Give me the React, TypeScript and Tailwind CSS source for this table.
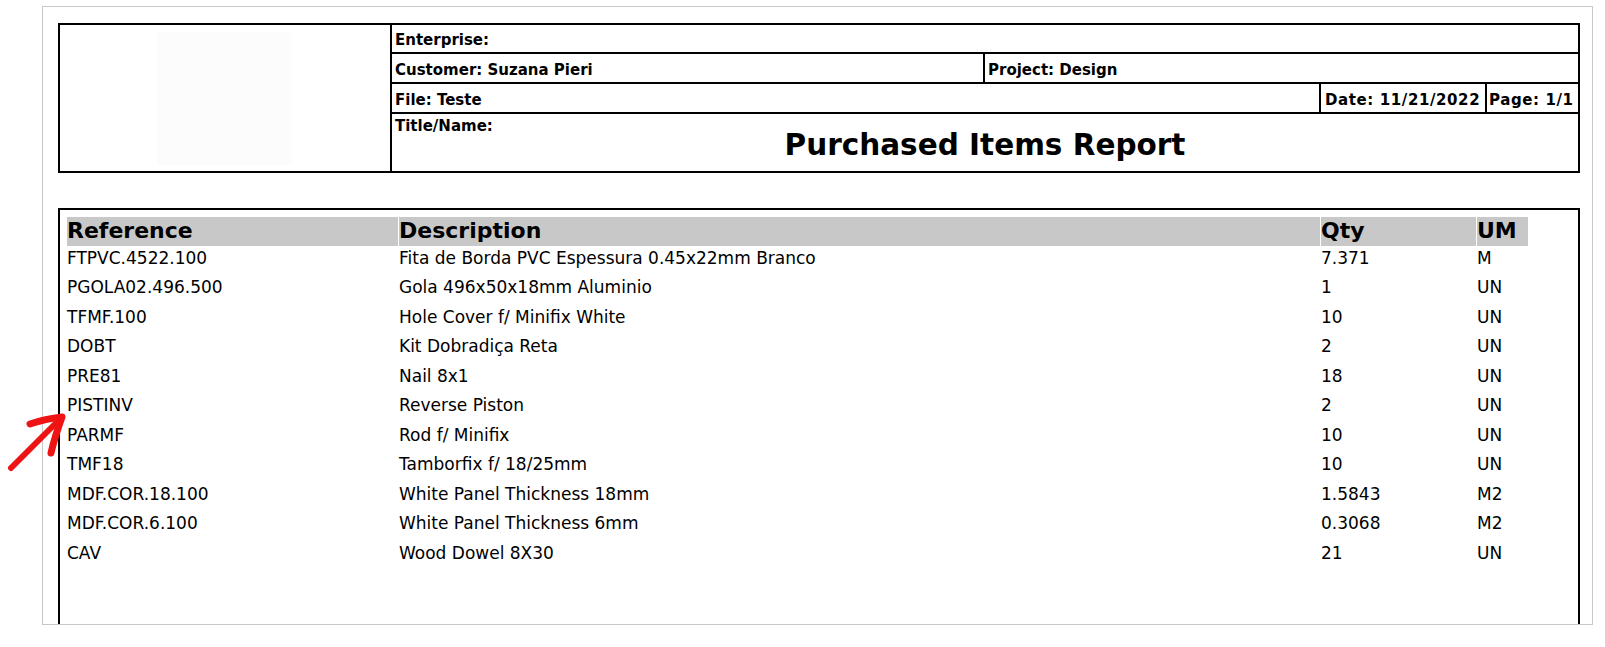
import React from 'react';

type Item = { ref: string; desc: string; qty: string; um: string };

const items: Item[] = [
  { ref: 'FTPVC.4522.100', desc: 'Fita de Borda PVC Espessura 0.45x22mm Branco', qty: '7.371', um: 'M' },
  { ref: 'PGOLA02.496.500', desc: 'Gola 496x50x18mm Aluminio', qty: '1', um: 'UN' },
  { ref: 'TFMF.100', desc: 'Hole Cover f/ Minifix White', qty: '10', um: 'UN' },
  { ref: 'DOBT', desc: 'Kit Dobradiça Reta', qty: '2', um: 'UN' },
  { ref: 'PRE81', desc: 'Nail 8x1', qty: '18', um: 'UN' },
  { ref: 'PISTINV', desc: 'Reverse Piston', qty: '2', um: 'UN' },
  { ref: 'PARMF', desc: 'Rod f/ Minifix', qty: '10', um: 'UN' },
  { ref: 'TMF18', desc: 'Tamborfix f/ 18/25mm', qty: '10', um: 'UN' },
  { ref: 'MDF.COR.18.100', desc: 'White Panel Thickness 18mm', qty: '1.5843', um: 'M2' },
  { ref: 'MDF.COR.6.100', desc: 'White Panel Thickness 6mm', qty: '0.3068', um: 'M2' },
  { ref: 'CAV', desc: 'Wood Dowel 8X30', qty: '21', um: 'UN' },
];

const cols = 'grid grid-cols-[331px_921px_155px_51px] gap-x-[1px]';

const App: React.FC = () => {
  return (
    <div className="relative min-h-screen bg-white text-black font-['DejaVu_Sans',Verdana,sans-serif]">
      <div className="pl-[42px] pt-[6px]">
        {/* Page sheet */}
        <div className="w-[1551px] h-[619px] border border-[#c8c8c8] overflow-hidden pl-[15px] pt-[16px]">
          {/* Header block */}
          <div className="w-[1522px] h-[150px] border-2 border-black flex">
            <div className="w-[332px] shrink-0 border-r-2 border-black pl-[97px] pt-[7px]">
              <div className="w-[135px] h-[133px] bg-[#fcfcfc]" />
            </div>
            <div className="flex-1 flex flex-col text-[15px] font-bold">
              <div className="h-[29px] border-b-2 border-black pl-[3px] pt-[6px] leading-[18px]">Enterprise:</div>
              <div className="h-[30px] border-b-2 border-black flex">
                <div className="w-[593px] shrink-0 border-r-2 border-black pl-[3px] pt-[7px] leading-[18px]">Customer: Suzana Pieri</div>
                <div className="flex-1 pl-[3px] pt-[7px] leading-[18px]">Project: Design</div>
              </div>
              <div className="h-[30px] border-b-2 border-black flex">
                <div className="w-[929px] shrink-0 border-r-2 border-black pl-[3px] pt-[7px] leading-[18px]">File: Teste</div>
                <div className="w-[166px] shrink-0 border-r-2 border-black pl-[4px] pt-[7px] leading-[18px] tracking-[0.6px] whitespace-nowrap">Date: 11/21/2022</div>
                <div className="flex-1 pl-[2px] pt-[7px] leading-[18px] tracking-[0.6px] whitespace-nowrap">Page: 1/1</div>
              </div>
              <div className="flex-1 flex flex-col">
                <div className="pl-[3px] pt-[4px] leading-[17px]">Title/Name:</div>
                <div className="-mt-[5px] text-center text-[29.5px] leading-[30px]">Purchased Items Report</div>
              </div>
            </div>
          </div>

          {/* Items table */}
          <div className="mt-[35px] w-[1522px] h-[480px] border-2 border-b-0 border-black pl-[7px] pt-[7px]">
            <div className={`${cols} h-[28.5px] text-[22px] font-bold leading-[28.5px]`}>
              <div className="bg-[#c8c8c8]">Reference</div>
              <div className="bg-[#c8c8c8]">Description</div>
              <div className="bg-[#c8c8c8]">Qty</div>
              <div className="bg-[#c8c8c8]">UM</div>
            </div>
            {items.map((it) => (
              <div key={it.ref} className={`${cols} h-[29.5px] text-[17px] leading-[24px]`}>
                <div>{it.ref}</div>
                <div>{it.desc}</div>
                <div>{it.qty}</div>
                <div>{it.um}</div>
              </div>
            ))}
          </div>
        </div>
      </div>

      {/* Red annotation arrow */}
      <svg className="absolute left-0 top-[400px] w-[80px] h-[80px]" viewBox="0 0 80 80" fill="none">
        <path
          d="M11 68 C 28 51, 45 34, 61 18"
          stroke="#ee1414"
          strokeWidth="6"
          strokeLinecap="round"
        />
        <path
          d="M30 24 C 42 20, 53 18, 62 17 C 58 28, 54 40, 51 53"
          stroke="#ee1414"
          strokeWidth="7"
          strokeLinecap="round"
          strokeLinejoin="round"
        />
      </svg>
    </div>
  );
};

export default App;
